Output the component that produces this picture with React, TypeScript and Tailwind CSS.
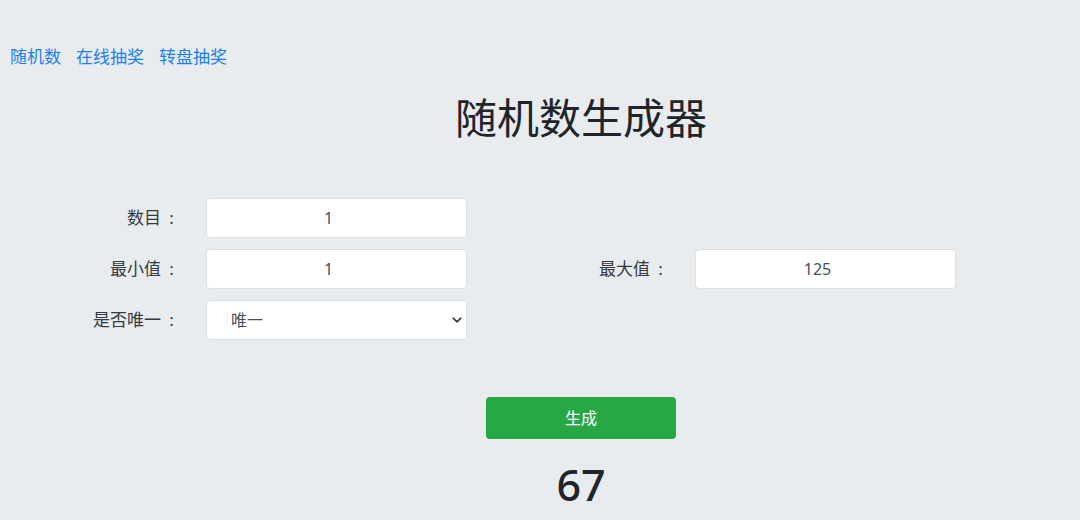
import { useState } from "react"

const font = { fontFamily: '"Noto Sans", "Noto Sans CJK SC", sans-serif' }

function Label({ text }: { text: string }) {
  return (
    <label className="w-[182px] text-right text-[17px] text-[#343a40]">
      {text}
      <span className="inline-block w-[21px] text-center">:</span>
    </label>
  )
}

function Field({ label, value }: { label: string; value: string }) {
  return (
    <div className="flex items-center gap-6">
      <Label text={label} />
      <input
        readOnly
        value={value}
        className="h-10 w-[261px] rounded border border-[#dde1e5] bg-white pr-4 text-center text-[16px] text-[#495057] outline-none"
      />
    </div>
  )
}

export default function App() {
  const [result] = useState(67)

  return (
    <div className="min-h-[520px] w-full bg-[#e9ecef]" style={font}>
      <nav className="flex gap-[15px] pl-[10px] pt-[44px] text-[17px] leading-[26px] text-[#1a7ff0]">
        <a href="#">随机数</a>
        <a href="#">在线抽奖</a>
        <a href="#">转盘抽奖</a>
      </nav>

      <h1 className="mt-[20px] pl-[82px] text-center text-[42px] leading-[56px] text-[#212529]">随机数生成器</h1>

      <div className="mt-[52px] flex flex-col gap-[11px]">
        <Field label="数目" value="1" />
        <div className="flex gap-[22px]">
          <Field label="最小值" value="1" />
          <Field label="最大值" value="125" />
        </div>
        <div className="flex items-center gap-6">
          <Label text="是否唯一" />
          <div className="relative w-[261px]">
            <select className="h-10 w-full appearance-none rounded border border-[#dde1e5] bg-white pl-6 text-[16px] text-[#495057] outline-none">
              <option>唯一</option>
              <option>不唯一</option>
            </select>
            <svg
              className="pointer-events-none absolute right-[5px] top-[15px]"
              width="10"
              height="10"
              viewBox="0 0 16 16"
              fill="none"
              stroke="#343a40"
              strokeWidth="2.5"
              strokeLinecap="round"
              strokeLinejoin="round"
            >
              <path d="M2 5l6 6 6-6" />
            </svg>
          </div>
        </div>
      </div>

      <div className="mt-[57px] flex flex-col items-center pl-[82px]">
        <button className="h-[42px] w-[190px] rounded bg-[#28a745] text-[16px] text-white">生成</button>
        <div className="mt-[20px] text-[43px] font-medium leading-[52px] text-[#212529]">{result}</div>
      </div>
    </div>
  )
}
